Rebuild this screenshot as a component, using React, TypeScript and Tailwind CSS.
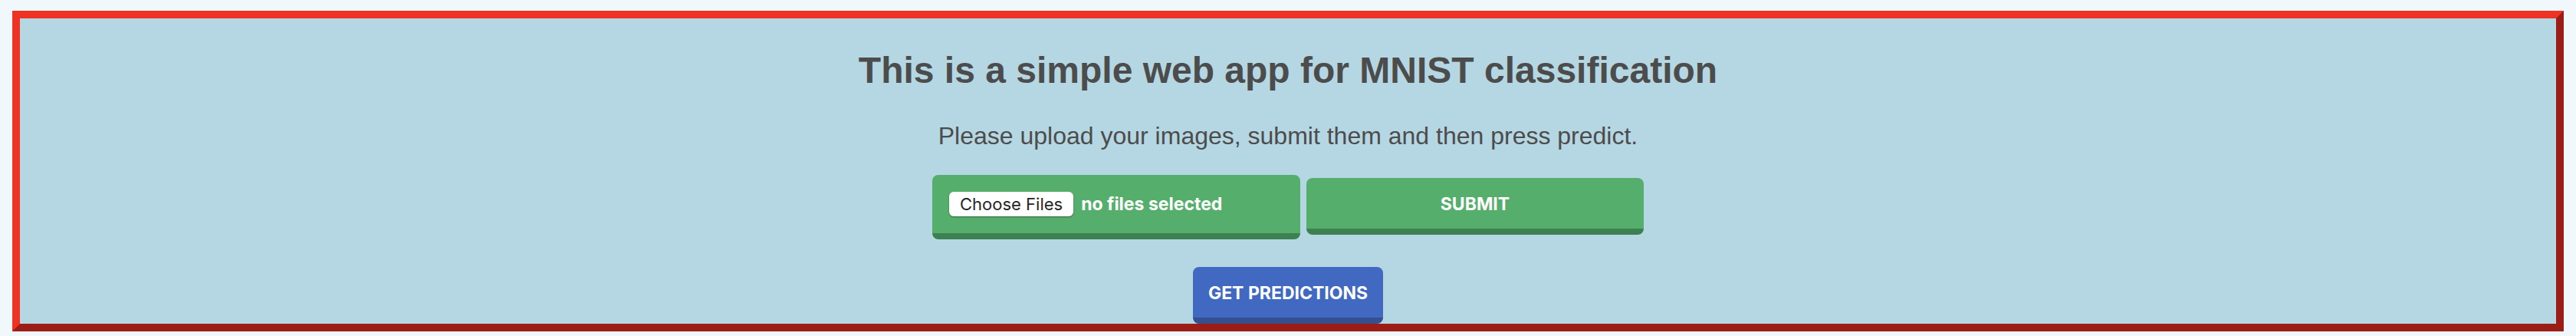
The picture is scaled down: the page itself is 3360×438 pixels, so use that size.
import { useState } from "react";

const raised =
  "rounded-lg border-b-8 font-['Inter',sans-serif] text-[23px] leading-[30px] font-bold text-white";

export default function App() {
  const [count, setCount] = useState(0);
  const status = count === 0 ? "no files selected" : `${count} files`;

  return (
    <div className="min-h-screen bg-[#f0f8fc] px-4 pt-3.5 text-[#4c4c4c]">
      <main className="flex flex-col items-center border-10 border-t-[#ee3224] border-r-[#9b1d15] border-b-[#9b1d15] border-l-[#ee3224] bg-[#b5d7e3] pt-10 text-center font-['Liberation_Sans',Arial,sans-serif]">
        <h1 className="text-5xl leading-14 font-bold">This is a simple web app for MNIST classification</h1>
        <p className="mt-8 text-[32px] leading-[50px]">Please upload your images, submit them and then press predict.</p>
        <form
          className="mt-[26px] flex flex-wrap items-start justify-center gap-2"
          onSubmit={(event) => event.preventDefault()}
        >
          <input
            id="images"
            type="file"
            multiple
            className="sr-only"
            onChange={(event) => setCount(event.target.files?.length ?? 0)}
          />
          <label
            htmlFor="images"
            className={`${raised} flex h-21 w-120 cursor-pointer items-center gap-2.5 border-[#3d8051] bg-[#56ae6c] px-[22px]`}
          >
            <span className="rounded-md bg-white px-3.5 text-[22px] leading-8 font-normal text-[#262626] shadow-[0_1px_2px_rgba(0,0,0,0.4)]">
              Choose Files
            </span>
            <span>{status}</span>
          </label>
          <button
            type="submit"
            className={`${raised} mt-1 w-110 cursor-pointer border-[#3d8051] bg-[#56ae6c] pt-[19px] pb-[17px]`}
          >
            SUBMIT
          </button>
        </form>
        <button
          type="button"
          className={`${raised} mt-9 cursor-pointer border-[#36508f] bg-[#4169c1] px-5 pt-[19px] pb-[17px]`}
        >
          GET PREDICTIONS
        </button>
      </main>
    </div>
  );
}
